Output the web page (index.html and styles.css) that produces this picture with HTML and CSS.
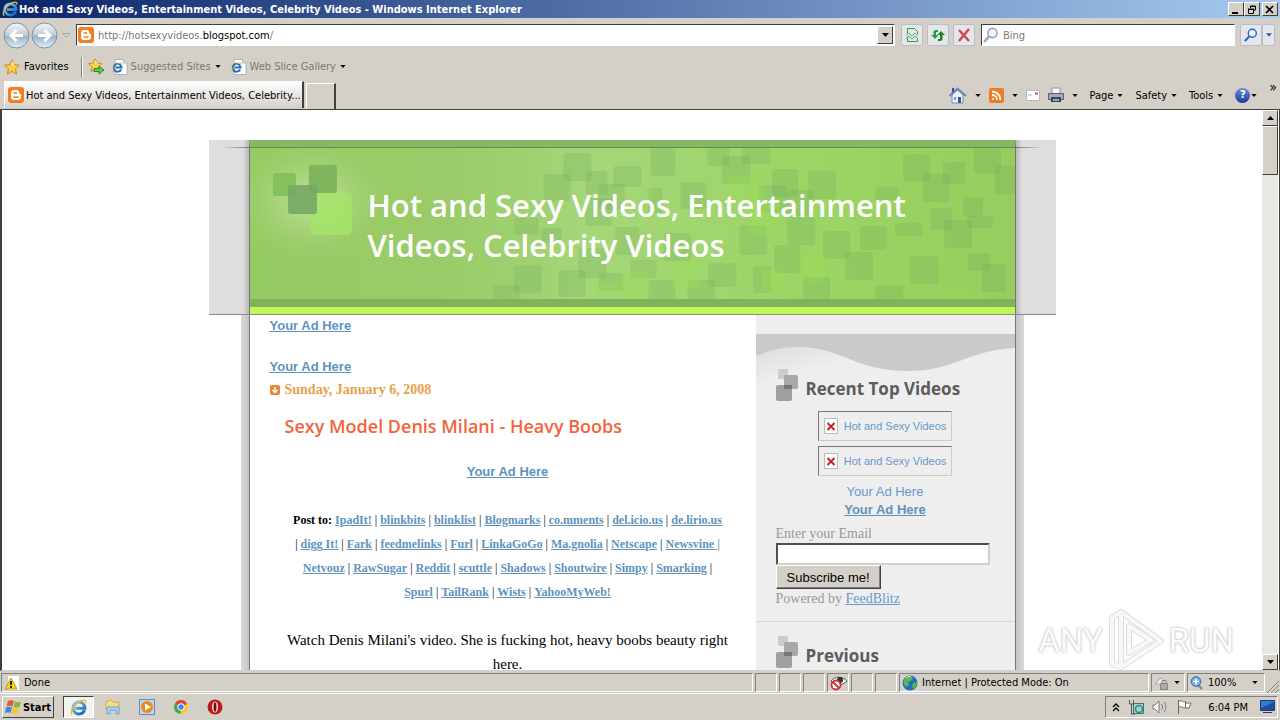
FILE: index.html
```html
<!DOCTYPE html>
<html lang="en">
<head>
    <meta charset="UTF-8">
    <meta name="viewport" content="width=device-width, initial-scale=1.0">
    <title>Hot and Sexy Videos, Entertainment Videos, Celebrity Videos</title>
    <link rel="stylesheet" href="styles.css">
</head>
<body>

    <!-- Shared icons -->
    <svg class="defs" width="0" height="0" aria-hidden="true">
        <defs>
            <linearGradient id="orb" x1="0" y1="0" x2="0" y2="1">
                <stop offset="0" stop-color="#f4f7fa"/><stop offset="0.45" stop-color="#c3cfdb"/><stop offset="0.55" stop-color="#9fb4c8"/><stop offset="1" stop-color="#dff2fd"/>
            </linearGradient>
            <linearGradient id="ieblue" x1="0" y1="0" x2="1" y2="1">
                <stop offset="0" stop-color="#7fd4fa"/><stop offset="1" stop-color="#0a5fb8"/>
            </linearGradient>
            <symbol id="ie" viewBox="0 0 16 16">
                <path d="M13.6 10.6A5.6 5.6 0 1 1 14 8.6H5" fill="none" stroke="url(#ieblue)" stroke-width="2.8"/>
                <path d="M2.2 14.6C-.6 13.5 3 6.5 8 3.2c3.5-2.4 7.600-3 6.800.4" fill="none" stroke="#f2b91d" stroke-width="1.3"/>
            </symbol>
            <symbol id="iepage" viewBox="0 0 16 16">
                <path d="M3 .5h8.500L15 4v11.500H3z" fill="#fff" stroke="#a9b4c0"/>
                <path d="M11.500.5V4H15" fill="#dde4ec" stroke="#a9b4c0"/>
                <path d="M9.200 10.500A3.900 3.900 0 1 1 9.600 8.600H3.500" fill="none" stroke="#1d6fc4" stroke-width="2"/>
                <path d="M1.500 13C0 12 2.500 7 6 5c2.400-1.400 4.600-1.400 4.200.6" fill="none" stroke="#e5ae22"/>
            </symbol>
            <symbol id="blogger" viewBox="0 0 16 16">
                <rect width="16" height="16" rx="3" fill="#f57d20"/>
                <path d="M6 3h2.800a2.500 2.500 0 0 1 2.500 2.500c0 1 .3 1.400 1 1.400.5 0 .7.300.7.800V10a3 3 0 0 1-3 3H6a3 3 0 0 1-3-3V6a3 3 0 0 1 3-3z" fill="#fff"/>
                <path d="M6 6h2.500M6 10h4" stroke="#f57d20" stroke-width="1.500" stroke-linecap="round"/>
            </symbol>
            <symbol id="star" viewBox="0 0 16 16">
                <path d="M8 .8l2.200 4.900 5.200.5-3.900 3.600 1.100 5.300L8 12.400l-4.600 2.700 1.100-5.300L.6 6.200l5.200-.5z" fill="#fbd04a" stroke="#c98d13"/>
                <path d="M8 2.800l1.500 3.600" stroke="#fff3b5" stroke-width="1.500"/>
            </symbol>
            <symbol id="down" viewBox="0 0 7 4"><path d="M0 0h7L3.500 4z"/></symbol>
            <symbol id="squares" viewBox="0 0 22 33">
                <rect x="2" y="0" width="10" height="10" rx="1" fill="#ccc"/>
                <rect x="8" y="6" width="14" height="14" rx="2" fill="#a9a9a9"/>
                <rect x="0" y="16" width="16" height="16" rx="2" fill="#969696" fill-opacity="0.900"/>
                <path d="M8 16h8v4H8z" fill="#777"/>
            </symbol>
            <symbol id="lens" viewBox="0 0 16 16">
                <path d="M1 15l5.500-6" stroke="currentColor" stroke-width="2.500"/>
                <circle cx="9.500" cy="6" r="4.600" fill="#eef6fd" stroke="currentColor" stroke-width="1.600"/>
            </symbol>
            <symbol id="broken" viewBox="0 0 14 16">
                <path d="M.5.500h13v15H.5z" fill="#fff" stroke="#b4bcb8"/>
                <path d="M3.500 5l7 7m0-7l-7 7" stroke="#cc1f1f" stroke-width="2"/>
            </symbol>
        </defs>
    </svg>

    <!-- Title bar -->
    <header class="titlebar">
        <svg width="16" height="16"><use href="#ie"/></svg>
        <span class="title">Hot and Sexy Videos, Entertainment Videos, Celebrity Videos - Windows Internet Explorer</span>
        <button class="win" aria-label="Minimize"><svg width="10" height="9"><path d="M1 7h6v2H1z"/></svg></button>
        <button class="win" aria-label="Restore"><svg width="10" height="9" fill="none" stroke="#000"><path d="M3.500 3V1h5v4H7M3 1.500h6"/><path d="M1.500 4.500h5v4h-5zM1 4h6"/></svg></button>
        <button class="win close" aria-label="Close"><svg width="10" height="9" stroke="#000" stroke-width="1.600"><path d="M1 1l7 7m0-7L1 8"/></svg></button>
    </header>

    <!-- Address and search -->
    <div class="address-row">
        <button class="orb" aria-label="Back"><svg width="27" height="27"><circle cx="13.500" cy="13.500" r="12.500" fill="url(#orb)" stroke="#8190a4"/><path d="M20 13.500H8m5.500-5.500L8 13.500l5.500 5.500" fill="none" stroke="#fff" stroke-width="3"/></svg></button>
        <button class="orb" aria-label="Forward"><svg width="27" height="27"><circle cx="13.500" cy="13.500" r="12.500" fill="url(#orb)" stroke="#8190a4"/><path d="M7 13.500h12M13.500 8l5.500 5.500-5.500 5.500" fill="none" stroke="#fff" stroke-width="3"/></svg></button>
        <svg class="recent" width="8" height="5"><path d="M.5.500h7L4 4z" fill="#ddd9d2" stroke="#aaa69f"/></svg>
        <div class="field url">
            <svg width="16" height="16"><use href="#blogger"/></svg>
            <span class="url-text">http://hotsexyvideos.<b>blogspot.com</b>/</span>
            <button class="drop" aria-label="Show addresses"><svg width="7" height="4"><use href="#down"/></svg></button>
        </div>
        <button class="tool" aria-label="Compatibility view"><svg width="14" height="16" fill="none" stroke="#37a04a"><path d="M2.500 6V1.500h7l3 3V7M2.500 10v4.500h10V11"/><path d="M1 8l3-2 3 3 3-3 3 3M1 11l3-2 3 3 3-3 3 3" stroke="#55b365"/></svg></button>
        <button class="tool" aria-label="Refresh"><svg width="16" height="16"><path d="M5 3h3v2H6v3h2.500L5 12 1 8h2.500V4.500z" fill="#2f9a45"/><path d="M11 14H8v-2h2V8H7.500L11 4l4 4h-2.500v4.500z" fill="#1d7f33"/></svg></button>
        <button class="tool stop" aria-label="Stop"><svg width="14" height="14" stroke="#cf4a4a" stroke-width="2.500"><path d="M2 2l10 11M12 1L2 13"/></svg></button>
        <label class="field search">
            <svg width="16" height="16" color="#9aa4b1"><use href="#lens"/></svg>
            <input type="text" placeholder="Bing" aria-label="Search">
        </label>
        <div class="go">
            <button class="tool" aria-label="Search"><svg width="14" height="14" color="#2a5fd0"><use href="#lens"/></svg></button>
            <button class="tool narrow" aria-label="Search options"><svg width="6" height="4" fill="#2a5fb0"><use href="#down"/></svg></button>
        </div>
    </div>

    <!-- Favorites bar -->
    <nav class="favorites">
        <button class="flat"><svg width="16" height="16"><use href="#star"/></svg>Favorites</button>
        <span class="divider"></span>
        <button class="flat add" aria-label="Add to favorites"><svg width="18" height="17"><g transform="scale(.9)"><use href="#star" width="16" height="16"/></g><path d="M6 10.500h5V8l5 4-5 4v-2.500H6z" fill="#5fce3c" stroke="#2b8b22"/></svg></button>
        <a class="fav" href="#"><svg width="16" height="16"><use href="#iepage"/></svg>Suggested Sites<svg class="arrow"><use href="#down"/></svg></a>
        <a class="fav" href="#"><svg width="16" height="16"><use href="#iepage"/></svg>Web Slice Gallery<svg class="arrow"><use href="#down"/></svg></a>
    </nav>

    <!-- Tabs and commands -->
    <div class="tab-row">
        <button class="tab"><svg width="16" height="16"><use href="#blogger"/></svg>Hot and Sexy Videos, Entertainment Videos, Celebrity...</button>
        <button class="tab new" aria-label="New tab"></button>
        <div class="commands">
            <button class="flat"><svg width="18" height="17"><path d="M3 8v8h11V8L8.500 3z" fill="#eef2f8" stroke="#7688aa"/><path d="M.5 9L8.500 1.500 17 9" fill="none" stroke="#6f86b5" stroke-width="2"/><path d="M3 1h2v4H3zM9 10h3v6H9z" fill="#31559f"/><path d="M5 10h2v3H5z" fill="#5b9be0"/></svg><svg class="arrow"><use href="#down"/></svg></button>
            <button class="flat"><svg width="15" height="15" fill="none" stroke="#fff" stroke-width="1.800"><rect width="15" height="15" rx="2" fill="#ef7d26" stroke="none"/><path d="M3 7a5 5 0 0 1 5 5M3 3.500A8.500 8.500 0 0 1 11.500 12"/><circle cx="4" cy="11" r="1" fill="#fff" stroke="none"/></svg><svg class="arrow"><use href="#down"/></svg></button>
            <button class="flat" aria-label="Read mail"><svg width="14" height="11"><path d="M.5.500h13v10H.5z" fill="#fff" stroke="#b9b9c4"/><path d="M9 2.500h3v2H9z" fill="#d8555a"/><path d="M2 5h4" stroke="#b9b9c4"/></svg></button>
            <button class="flat"><svg width="16" height="16"><path d="M4 1h8v6H4z" fill="#fff" stroke="#8b8f97"/><path d="M.5 6.500h15v6H.5z" fill="#a5aab3" stroke="#5c616b"/><path d="M3 10h10v5H3z" fill="#3e434c"/><path d="M5 12h6v2H5z" fill="#6fb4e6"/></svg><svg class="arrow"><use href="#down"/></svg></button>
            <button class="flat">Page<svg class="arrow"><use href="#down"/></svg></button>
            <button class="flat">Safety<svg class="arrow"><use href="#down"/></svg></button>
            <button class="flat">Tools<svg class="arrow"><use href="#down"/></svg></button>
            <button class="flat help" aria-label="Help"><span>?</span><svg class="arrow"><use href="#down"/></svg></button>
            <span class="more">»</span>
        </div>
    </div>

    <!-- Page -->
    <div class="viewport">
        <main class="page">
            <div class="banner-wrap">
                <div class="banner">
                    <svg class="pattern" viewBox="0 0 766 151" preserveAspectRatio="none" aria-hidden="true">
                        <defs>
                            <radialGradient id="glow"><stop offset="0" stop-color="#c8e3a4"/><stop offset="1" stop-color="#99cc66" stop-opacity="0"/></radialGradient>
                            <linearGradient id="green"><stop offset="0" stop-color="#96ca62"/><stop offset="0.250" stop-color="#9acb68"/><stop offset="0.450" stop-color="#a5d678"/><stop offset="0.750" stop-color="#9bd563"/><stop offset="1" stop-color="#97cd5e"/></linearGradient>
                        </defs>
                        <rect width="766" height="151" fill="url(#green)"/>
                        <ellipse cx="62" cy="52" rx="85" ry="66" fill="url(#glow)"/>
                        <g transform="translate(0 -8)" fill="#6da25a" fill-opacity="0.220">
                            <rect x="314" y="13" width="28" height="28" rx="3"/><rect x="294" y="34" width="27" height="27" rx="3"/>
                            <rect x="336" y="31" width="22" height="24" rx="3"/><rect x="364" y="26" width="28" height="21" rx="3"/>
                            <rect x="349" y="44" width="26" height="26" rx="3"/><rect x="264" y="78" width="25" height="17" rx="3"/>
                            <rect x="292" y="88" width="20" height="15" rx="3"/><rect x="336" y="58" width="26" height="28" rx="3"/>
                            <rect x="264" y="125" width="28" height="28" rx="3"/><rect x="309" y="130" width="27" height="27" rx="3"/>
                            <rect x="244" y="145" width="26" height="14" rx="3"/><rect x="329" y="108" width="28" height="30" rx="3"/>
                            <rect x="349" y="133" width="25" height="18" rx="3"/><rect x="401" y="8" width="25" height="28" rx="3"/>
                            <rect x="473" y="16" width="28" height="28" rx="3"/><rect x="493" y="8" width="28" height="16" rx="3"/>
                            <rect x="523" y="29" width="26" height="28" rx="3"/><rect x="559" y="31" width="28" height="28" rx="3"/>
                            <rect x="431" y="42" width="26" height="27" rx="3"/><rect x="509" y="45" width="28" height="27" rx="3"/>
                            <rect x="536" y="50" width="28" height="26" rx="3"/><rect x="490" y="85" width="28" height="30" rx="3"/>
                            <rect x="538" y="77" width="28" height="28" rx="3"/><rect x="574" y="91" width="27" height="28" rx="3"/>
                            <rect x="611" y="86" width="27" height="24" rx="3"/><rect x="596" y="112" width="28" height="28" rx="3"/>
                            <rect x="626" y="47" width="24" height="13" rx="3"/><rect x="654" y="14" width="27" height="27" rx="3"/>
                            <rect x="674" y="34" width="27" height="28" rx="3"/><rect x="694" y="22" width="22" height="22" rx="3"/>
                            <rect x="725" y="7" width="27" height="27" rx="3"/><rect x="746" y="26" width="26" height="28" rx="3"/>
                            <rect x="646" y="83" width="27" height="13" rx="3"/><rect x="681" y="68" width="22" height="22" rx="3"/>
                            <rect x="695" y="80" width="28" height="28" rx="3"/><rect x="718" y="76" width="26" height="12" rx="3"/>
                            <rect x="714" y="57" width="20" height="20" rx="3"/><rect x="661" y="116" width="28" height="28" rx="3"/>
                            <rect x="733" y="124" width="24" height="28" rx="3"/><rect x="719" y="113" width="22" height="18" rx="3"/>
                            <rect x="626" y="145" width="28" height="14" rx="3"/><rect x="554" y="137" width="27" height="24" rx="3"/>
                            <rect x="504" y="126" width="18" height="27" rx="3"/><rect x="525" y="105" width="26" height="28" rx="3"/>
                            <rect x="459" y="123" width="28" height="24" rx="3"/><rect x="438" y="140" width="28" height="20" rx="3"/>
                            <rect x="398" y="140" width="28" height="20" rx="3"/><rect x="381" y="120" width="26" height="18" rx="3"/>
                            <rect x="414" y="93" width="28" height="28" rx="3"/><rect x="366" y="87" width="24" height="28" rx="3"/>
                            <rect x="399" y="48" width="14" height="25" rx="3"/><rect x="458" y="8" width="22" height="18" rx="3"/>
                        </g>
                        <g transform="translate(0 -8)" fill="#9de04f" fill-opacity="0.300">
                            <rect x="480" y="35" width="36" height="24" rx="3"/><rect x="500" y="58" width="30" height="38" rx="3"/>
                            <rect x="423" y="122" width="28" height="26" rx="3"/><rect x="371" y="132" width="30" height="28" rx="3"/>
                            <rect x="345" y="142" width="26" height="14" rx="3"/><rect x="512" y="130" width="20" height="22" rx="3"/>
                            <rect x="693" y="150" width="26" height="10" rx="3"/><rect x="553" y="116" width="22" height="26" rx="3"/>
                        </g>
                        <rect x="60" y="45" width="42" height="42" rx="5" fill="#a5e469" fill-opacity="0.850"/>
                        <rect x="23" y="25" width="23" height="23" rx="3" fill="#85c15b"/>
                        <rect x="59" y="17" width="28" height="28" rx="3" fill="#80b45d"/>
                        <rect x="38" y="37" width="29" height="29" rx="3" fill="#76a765" fill-opacity="0.900"/>
                    </svg>
                    <h1>Hot and Sexy Videos, Entertainment<br>Videos, Celebrity Videos</h1>
                </div>
            </div>
            <div class="columns">
                <section class="posts">
                    <p class="ad"><a href="#">Your Ad Here</a></p>
                    <p class="ad second"><a href="#">Your Ad Here</a></p>
                    <h2 class="date"><svg width="10" height="10"><rect width="10" height="10" rx="2" fill="#e8873a"/><path d="M5 2v5M2.500 5L5 7.500 7.500 5" fill="none" stroke="#fff" stroke-width="1.500"/></svg>Sunday, January 6, 2008</h2>
                    <article class="post">
                        <h3>Sexy Model Denis Milani - Heavy Boobs</h3>
                        <p class="ad"><a href="#">Your Ad Here</a></p>
                        <p class="bookmarks">
                            <strong>Post to:</strong> <a href="#">IpadIt!</a> | <a href="#">blinkbits</a> | <a href="#">blinklist</a> | <a href="#">Blogmarks</a> | <a href="#">co.mments</a> | <a href="#">del.icio.us</a> | <a href="#">de.lirio.us</a><br>
                            | <a href="#">digg It!</a> | <a href="#">Fark</a> | <a href="#">feedmelinks</a> | <a href="#">Furl</a> | <a href="#">LinkaGoGo</a> | <a href="#">Ma.gnolia</a> | <a href="#">Netscape</a> | <a href="#">Newsvine |</a><br>
                            <a href="#">Netvouz</a> | <a href="#">RawSugar</a> | <a href="#">Reddit</a> | <a href="#">scuttle</a> | <a href="#">Shadows</a> | <a href="#">Shoutwire</a> | <a href="#">Simpy</a> | <a href="#">Smarking</a> |<br>
                            <a href="#">Spurl</a> | <a href="#">TailRank</a> | <a href="#">Wists</a> | <a href="#">YahooMyWeb!</a>
                        </p>
                        <p class="text">Watch Denis Milani's video. She is fucking hot, heavy boobs beauty right<br>here.</p>
                    </article>
                </section>
                <aside class="sidebar">
                    <svg class="wave" viewBox="0 0 260 60" preserveAspectRatio="none" aria-hidden="true">
                        <defs><linearGradient id="fade" x1="0" y1="0" x2="0.400" y2="0.600"><stop offset="0" stop-color="#d8d8d8"/><stop offset="1" stop-color="#eee"/></linearGradient></defs>
                        <path d="M0 0h260v60H0z" fill="#eee"/>
                        <path d="M0 0h152v37L0 60z" fill="url(#fade)"/>
                        <path d="M0 0H260V14C210 17 200 37 152 37 100 37 85 13 43 13 25 13 12 17 0 22z" fill="#cacaca"/>
                    </svg>
                    <h2><svg width="22" height="33"><use href="#squares"/></svg>Recent Top Videos</h2>
                    <div class="videos">
                        <a class="thumb" href="#"><svg width="14" height="16"><use href="#broken"/></svg>Hot and Sexy Videos</a>
                        <a class="thumb" href="#"><svg width="14" height="16"><use href="#broken"/></svg>Hot and Sexy Videos</a>
                        <a class="plain" href="#">Your Ad Here</a>
                        <p class="ad"><a href="#">Your Ad Here</a></p>
                    </div>
                    <form class="subscribe">
                        <label for="email">Enter your Email</label>
                        <input type="text" id="email">
                        <button type="button">Subscribe me!</button>
                        <p>Powered by <a href="#">FeedBlitz</a></p>
                    </form>
                    <h2 class="previous"><svg width="22" height="33"><use href="#squares"/></svg>Previous</h2>
                </aside>
            </div>
        </main>
        <div class="scrollbar">
            <button aria-label="Scroll up"><svg width="7" height="4"><path d="M0 4h7L3.500 0z"/></svg></button>
            <div class="thumb-bar"></div>
            <button class="end" aria-label="Scroll down"><svg width="7" height="4"><use href="#down"/></svg></button>
        </div>
        <div class="watermark">
            <span>ANY</span>
            <svg width="58" height="62" viewBox="0 0 58 62" fill="none" stroke-linejoin="round">
                <path d="M14 3v55l40-26zM14 3L5 9v46l9 3M22 17v27l22-13z" stroke="#dedede" stroke-width="6"/>
                <path d="M14 3v55l40-26zM14 3L5 9v46l9 3M22 17v27l22-13z" stroke="#f8f8f8" stroke-width="4"/>
            </svg>
            <span>RUN</span>
        </div>
    </div>

    <!-- Status bar -->
    <footer class="status">
        <div class="pane done"><svg width="16" height="16"><path d="M4 1h11v14H4z" fill="#fff"/><path d="M7 3L13 14H1z" fill="#f9d61b" stroke="#b99a10"/><path d="M7 6v4M7 11v2" stroke="#000" stroke-width="1.600"/></svg>Done</div>
        <div class="pane small"></div>
        <div class="pane small"></div>
        <div class="pane small"></div>
        <div class="pane small"><svg width="18" height="16"><path d="M1 6c4-5 11-5 16 0-5 5-12 5-16 0z" fill="#fff" stroke="#555"/><circle cx="10" cy="5" r="3" fill="#333"/><circle cx="6" cy="10" r="4.500" fill="#fff" stroke="#cf3030" stroke-width="1.800"/><path d="M3 7l6 6" stroke="#cf3030" stroke-width="1.800"/></svg></div>
        <div class="pane small"></div>
        <div class="pane small"></div>
        <div class="pane zone"><svg width="16" height="16"><circle cx="8" cy="8" r="7.500" fill="#1d6dc2"/><path d="M3 3c3-3 7-2 8 0L9 6 6 7l1 3-3 2C1 9 1 6 3 3zM11 8l4-1c0 3-2 6-4 7l-1-3z" fill="#58b848"/><path d="M4 3c2-2 4-2 5-1" stroke="#c5e9fb" fill="none"/></svg>Internet | Protected Mode: On</div>
        <div class="pane lock"><svg width="16" height="14"><path d="M1 8l6-6 3 3-3 3z" fill="#eee" stroke="#aaa"/><path d="M6.500 7.500h7v6h-7z" fill="#aaa" stroke="#888"/><path d="M8 7V4.500h4V7" fill="none" stroke="#888"/></svg><svg class="arrow"><use href="#down"/></svg></div>
        <div class="pane zoom"><svg width="14" height="14"><path d="M8 9l4 4" stroke="#9a8a70" stroke-width="2.500"/><circle cx="6" cy="5.500" r="4.800" fill="#68b1ed" stroke="#2668b0"/><path d="M3 5.500h6m-3-3v6" stroke="#fff" stroke-width="1.600"/></svg>100%<svg class="arrow"><use href="#down"/></svg></div>
        <svg class="grip" width="12" height="12" stroke="#8a867e"><path d="M0 12L12 0M4 12l8-8M8 12l4-4"/></svg>
    </footer>

    <!-- Taskbar -->
    <footer class="taskbar">
        <button class="start"><svg width="17" height="16"><path d="M3 2c2-1 4-1 6 0L7.500 7.500c-2-1-4-1-6 0z" fill="#e8592b"/><path d="M10 2.500c2 1 4 1 6 0L14.500 8c-2 1-4 1-6 0z" fill="#7dbb3c"/><path d="M1 8.500c2-1 4-1 6 0L5.500 14c-2-1-4-1-5.500 0z" fill="#3f86d8"/><path d="M8 9c2 1 4 1 6 0l-1.500 5.500c-2 1-4 1-6 0z" fill="#f8c62c"/></svg>Start</button>
        <button class="task active" aria-label="Internet Explorer"><svg width="17" height="17"><use href="#ie"/></svg></button>
        <button class="task" aria-label="Explorer"><svg width="16" height="16"><path d="M1 3l5-2 2 2h6v8H1z" fill="#f4dc83" stroke="#d2ac45"/><path d="M2 15V8h12v7h-3v-4H5v4z" fill="#a9d6f2" stroke="#6ba7d3"/></svg></button>
        <button class="task" aria-label="Media Player"><svg width="16" height="16"><path d="M.5.500h15v15H.5z" fill="#b8d9f3" stroke="#5a8fc4"/><circle cx="8" cy="8" r="6" fill="#f28718"/><path d="M6 4.500v7L12 8z" fill="#fff"/></svg></button>
        <button class="task" aria-label="Chrome"><svg width="14" height="14"><circle cx="7" cy="7" r="7" fill="#f6c92c"/><path d="M7 7L1 3.400A7 7 0 0 1 13.200 4z" fill="#df4937"/><path d="M7 7L1 3.400A7 7 0 0 0 6.500 14z" fill="#3fa656"/><circle cx="7" cy="7" r="3.300" fill="#4a86e0" stroke="#fff"/></svg></button>
        <button class="task" aria-label="Opera"><svg width="16" height="16"><circle cx="8" cy="8" r="7.500" fill="#c01818"/><ellipse cx="8" cy="8" rx="3" ry="5.500" fill="#fbeaea"/><ellipse cx="8" cy="8" rx="1.500" ry="4.800" fill="#741010"/></svg></button>
        <div class="tray">
            <svg width="8" height="9" fill="none" stroke="#000" stroke-width="1.300"><path d="M1 4l3-3 3 3M1 8l3-3 3 3"/></svg>
            <svg width="16" height="16"><path d="M5.500 4.500h10v10h-10z" fill="#9fd4cf" stroke="#506a72"/><circle cx="11" cy="10" r="3.500" fill="none" stroke="#25917f" stroke-width="1.600"/><path d="M1.500 1v4h4V1M3.500 5v10H7" fill="none" stroke="#555"/></svg>
            <svg width="16" height="16" fill="none" stroke="#777"><path d="M1 6h2l4-4v12l-4-4H1z" fill="#fff"/><path d="M9.500 5c1.500 2 1.500 4 0 6M12 3c2.500 3 2.500 7 0 10"/></svg>
            <svg width="16" height="16" fill="#fff" stroke="#666"><path d="M2.500 1v14M2.500 2.500c3-2 4 1 7 0v6c-3 1-4-2-7 0M9.500 4H15l-2 5H9"/></svg>
            <time>6:04 PM</time>
            <svg width="15" height="14"><path d="M.5.500h14v10H.5z" fill="#3377cf" stroke="#1f3f75"/><path d="M1 8L14 2v8H1z" fill="#1b4f9f"/><path d="M3 12.500h9" stroke="#333"/></svg>
        </div>
    </footer>

</body>
</html>
```
FILE: styles.css
```css
* {
    box-sizing: border-box;
}

body {
    margin: 0;
    height: 100vh;
    display: flex;
    flex-direction: column;
    overflow: hidden;
    background-color: #d4d0c8;
    color: #000;
    font-family: "DejaVu Sans Condensed", "DejaVu Sans", sans-serif;
    font-size: 11px;
}

h1, h2, h3, p {
    margin: 0;
}

svg {
    flex: none;
}

button {
    display: flex;
    align-items: center;
    justify-content: center;
    margin: 0;
    padding: 0;
    border: 0;
    background: none;
    color: inherit;
    font: inherit;
    white-space: nowrap;
}

.defs {
    position: absolute;
}

.arrow {
    width: 6px;
    height: 3px;
}

/* Title bar */
.titlebar {
    display: flex;
    align-items: center;
    height: 18px;
    padding: 0 2px;
    background: linear-gradient(to right, #0a246a, #a6caf0);
    color: #fff;
    font-weight: bold;
}

.title {
    flex: 1;
    padding-left: 1px;
}

.win {
    width: 16px;
    height: 14px;
    background-color: #d4d0c8;
    border: 1px solid;
    border-color: #fff #404040 #404040 #fff;
}

.close {
    margin-left: 2px;
}

/* Address row */
.address-row {
    display: flex;
    align-items: center;
    height: 34px;
    padding: 0 5px 0 2px;
}

.orb {
    width: 28px;
}

.recent {
    margin: 0 6px 0 4px;
}

.field {
    display: flex;
    align-items: center;
    height: 22px;
    padding: 0 1px;
    background-color: #fff;
    border: 1px solid;
    border-color: #404040 #fff #fff #404040;
}

.url {
    flex: 1;
    margin-right: 6px;
}

.url-text {
    flex: 1;
    padding-left: 4px;
    color: #777;
}

.url-text b {
    color: #000;
    font-weight: normal;
}

.drop {
    width: 16px;
    height: 18px;
    background-color: #d4d0c8;
    border: 1px solid;
    border-color: #fff #404040 #404040 #fff;
}

.tool {
    width: 22px;
    height: 22px;
    margin-right: 4px;
    background-color: #e4e6ea;
    border: 1px solid #b8bec8;
    border-radius: 2px;
}

.stop {
    margin-right: 6px;
}

.search {
    width: 254px;
    margin-right: 5px;
}

.search input {
    flex: 1;
    min-width: 0;
    padding: 0 4px;
    border: 0;
    outline: 0;
    font: inherit;
}

.search input::placeholder {
    color: #777;
}

.go {
    display: flex;
}

.go .tool {
    margin: 0;
}

.go .narrow {
    width: 13px;
}

/* Favorites bar */
.favorites {
    display: flex;
    align-items: center;
    height: 29px;
    padding-left: 4px;
}

.flat {
    gap: 4px;
}

.divider {
    width: 2px;
    height: 20px;
    margin: 0 5px 0 12px;
    border-left: 1px solid #8a867e;
    border-right: 1px solid #fff;
}

.fav {
    display: flex;
    align-items: center;
    gap: 3px;
    margin: 0 10px 0 6px;
    color: #7b7872;
    text-decoration: none;
}

.fav + .fav {
    margin-left: 0;
}

.fav .arrow {
    margin-left: 1px;
    fill: #000;
}

/* Tabs */
.tab-row {
    display: flex;
    height: 28px;
    padding-left: 4px;
}

.tab {
    height: 27px;
    gap: 2px;
    padding: 0 1px 0 3px;
    background: linear-gradient(#fff, #d4d0c8);
    border: 1px solid #fff;
    border-right: 2px solid #404040;
    border-bottom: 0;
}

.new {
    width: 30px;
    height: 26px;
    margin: 2px 0 0 2px;
    background: none;
}

.commands {
    flex: 1;
    display: flex;
    align-items: center;
    justify-content: flex-end;
    gap: 12px;
    padding-right: 3px;
}

.commands .flat {
    gap: 4px;
}

.commands .flat:nth-child(-n+2) {
    gap: 8px;
    margin-right: -4px;
}

.commands .flat:nth-child(4) {
    gap: 8px;
    margin-left: -4px;
}

.help span {
    width: 15px;
    height: 15px;
    border-radius: 50%;
    background: linear-gradient(#6b8fe0, #183a9b);
    color: #fff;
    font-weight: bold;
}

.commands .help {
    gap: 1px;
}

.more {
    align-self: flex-start;
    font-size: 14px;
    line-height: 12px;
}

/* Viewport */
.viewport {
    position: relative;
    flex: 1;
    display: flex;
    min-height: 0;
    margin-bottom: 2px;
    padding-right: 1px;
    background-color: #fff;
    border: 1px solid #404040;
    border-left-width: 2px;
    border-bottom: 1px solid #d4d0c8;
}

.page {
    flex: 1;
    overflow: hidden;
    padding-top: 30px;
}

.banner-wrap {
    max-width: 847px;
    margin: 0 auto;
    padding: 0 40px;
    background:
        linear-gradient(to right, transparent 12px, #777 40px, #777 calc(100% - 40px), transparent calc(100% - 12px)) 0 7px / 100% 1px no-repeat,
        linear-gradient(to right, #dedede 34px, #b8b8bc 40px, #b8b8bc calc(100% - 40px), #dedede calc(100% - 34px));
    border-bottom: 1px solid #8a8a8a;
}

.banner {
    position: relative;
    height: 174px;
    padding: 38px 0 0 118px;
    background-color: #c1f757;
    border-top: 7px solid #88b863;
    border-left: 1px solid #777;
    border-right: 1px solid #777;
    color: #fff;
}

.pattern {
    position: absolute;
    top: 0;
    left: 0;
    width: 100%;
    height: 160px;
    border-top: 1px solid #608a49;
    border-bottom: 8px solid #83b25d;
}

.banner h1 {
    position: relative;
    font-family: "Open Sans", sans-serif;
    font-size: 31px;
    font-weight: 600;
    line-height: 40px;
    white-space: nowrap;
}

.columns {
    display: flex;
    max-width: 783px;
    margin: 0 auto;
    padding: 0 8px;
    background: linear-gradient(to right, #d9d9d9, #c4c4c8 8px, #fff 8px, #fff calc(100% - 8px), #c4c4c8 calc(100% - 8px), #d9d9d9);
}

a {
    color: #6699cc;
}

/* Posts */
.posts {
    flex: 1;
    height: 380px;
    padding: 2px 20px 0;
    border-left: 1px solid #777;
    font-family: "Liberation Serif", serif;
}

.ad {
    font-family: "Liberation Sans", Arial, sans-serif;
    font-size: 13px;
    font-weight: bold;
    line-height: 17px;
}

.ad a {
    color: #5f93bd;
}

.second {
    margin-top: 24px;
}

.date {
    display: flex;
    align-items: center;
    gap: 5px;
    margin-top: 6px;
    color: #e8a04c;
    font-size: 14px;
    line-height: 18px;
}

.post {
    padding: 0 5px 0 15px;
    text-align: center;
}

.post h3 {
    margin: 14px 0 24px;
    color: #f2643c;
    font-family: "Open Sans", sans-serif;
    font-size: 18px;
    font-weight: 600;
    line-height: 26px;
    text-align: left;
    white-space: nowrap;
}

.bookmarks {
    margin: 28px -10px 24px;
    font-size: 12px;
    line-height: 24px;
    white-space: nowrap;
}

.bookmarks a {
    color: #5f93bd;
    font-weight: bold;
}

.text {
    font-size: 15px;
    line-height: 24px;
    white-space: nowrap;
}

/* Sidebar */
.sidebar {
    width: 260px;
    padding-top: 19px;
    background-color: #eee;
    border-right: 1px solid #777;
    color: #999;
    font-family: "Liberation Serif", serif;
    font-size: 14px;
}

.wave {
    display: block;
    width: 100%;
    height: 60px;
}

.sidebar h2 {
    display: flex;
    align-items: flex-end;
    gap: 8px;
    margin-top: -25px;
    padding-left: 20px;
    color: #5c5c5c;
    font-family: "Open Sans", sans-serif;
    font-size: 17px;
    line-height: 26px;
}

.videos {
    display: flex;
    flex-direction: column;
    align-items: center;
    padding-top: 9px;
    font-family: "Liberation Sans", Arial, sans-serif;
}

.thumb {
    display: flex;
    align-items: center;
    gap: 6px;
    height: 30px;
    margin-bottom: 5px;
    padding: 0 5px;
    border: 1px solid;
    border-color: #777 #ccc #ccc #777;
    font-size: 11px;
    text-decoration: none;
}

.plain {
    margin-top: 2px;
    font-size: 13px;
    line-height: 18px;
    text-decoration: none;
}

.videos .ad {
    line-height: 18px;
}

.subscribe {
    display: flex;
    flex-direction: column;
    align-items: flex-start;
    padding: 6px 25px 12px 20px;
    border-bottom: 1px solid #d6d6d6;
}

.subscribe label {
    line-height: 18px;
}

.subscribe input {
    width: 100%;
    height: 22px;
    border: 2px solid;
    border-color: #505050 #d4d0c8 #d4d0c8 #505050;
}

.subscribe button {
    height: 24px;
    padding: 0 10px;
    background-color: #d4d0c8;
    border: 1px solid;
    border-color: #fff #404040 #404040 #fff;
    box-shadow: inset -1px -1px #808080;
    color: #000;
    font-family: "Liberation Sans", Arial, sans-serif;
    font-size: 13px;
}

.subscribe p {
    line-height: 20px;
}

.sidebar .previous {
    margin-top: 14px;
}

/* Scrollbar */
.scrollbar {
    display: flex;
    flex-direction: column;
    width: 16px;
    background-color: #e9e7e3;
}

.scrollbar button,
.thumb-bar {
    height: 16px;
    background-color: #d4d0c8;
    border: 1px solid;
    border-color: #fff #404040 #404040 #fff;
}

.thumb-bar {
    height: 49px;
}

.scrollbar .end {
    margin-top: auto;
}

/* Watermark lies over the page */
.watermark {
    position: absolute;
    right: 45px;
    bottom: -1px;
    display: flex;
    align-items: center;
    gap: 4px;
    color: #fbfbfb;
    font-family: Roboto, sans-serif;
    font-size: 33px;
    text-shadow: 0 0 2px #bbb, 0 0 3px #ccc;
}

/* Status bar */
.status {
    display: flex;
    height: 21px;
    padding: 0 1px;
    gap: 2px;
    border-bottom: 1px solid #fff;
}

.pane {
    display: flex;
    align-items: center;
    gap: 4px;
    height: 19px;
    padding: 0 2px;
    border: 1px solid;
    border-color: #808080 #fff #fff #808080;
    white-space: nowrap;
}

.done {
    flex: 1;
}

.small {
    width: 22px;
}

.zone {
    width: 250px;
}

.lock {
    width: 34px;
}

.zoom {
    width: 78px;
}

.zoom .arrow {
    margin: 0 4px 0 auto;
}

.grip {
    align-self: flex-end;
}

/* Taskbar */
.taskbar {
    display: flex;
    align-items: center;
    height: 26px;
    padding: 0 2px;
}

.start {
    width: 52px;
    height: 22px;
    gap: 1px;
    margin-right: 9px;
    border: 1px solid;
    border-color: #fff #404040 #404040 #fff;
    font-weight: bold;
}

.task {
    width: 31px;
    height: 22px;
    margin-right: 3px;
}

.active {
    background-color: #f4f2ef;
    border: 1px solid;
    border-color: #404040 #fff #fff #404040;
}

.tray {
    display: flex;
    align-items: center;
    gap: 8px;
    height: 22px;
    margin-left: auto;
    padding: 0 2px 0 6px;
    border: 1px solid;
    border-color: #808080 #fff #fff #808080;
}

.tray time {
    margin: 0 4px 0 8px;
}
```
